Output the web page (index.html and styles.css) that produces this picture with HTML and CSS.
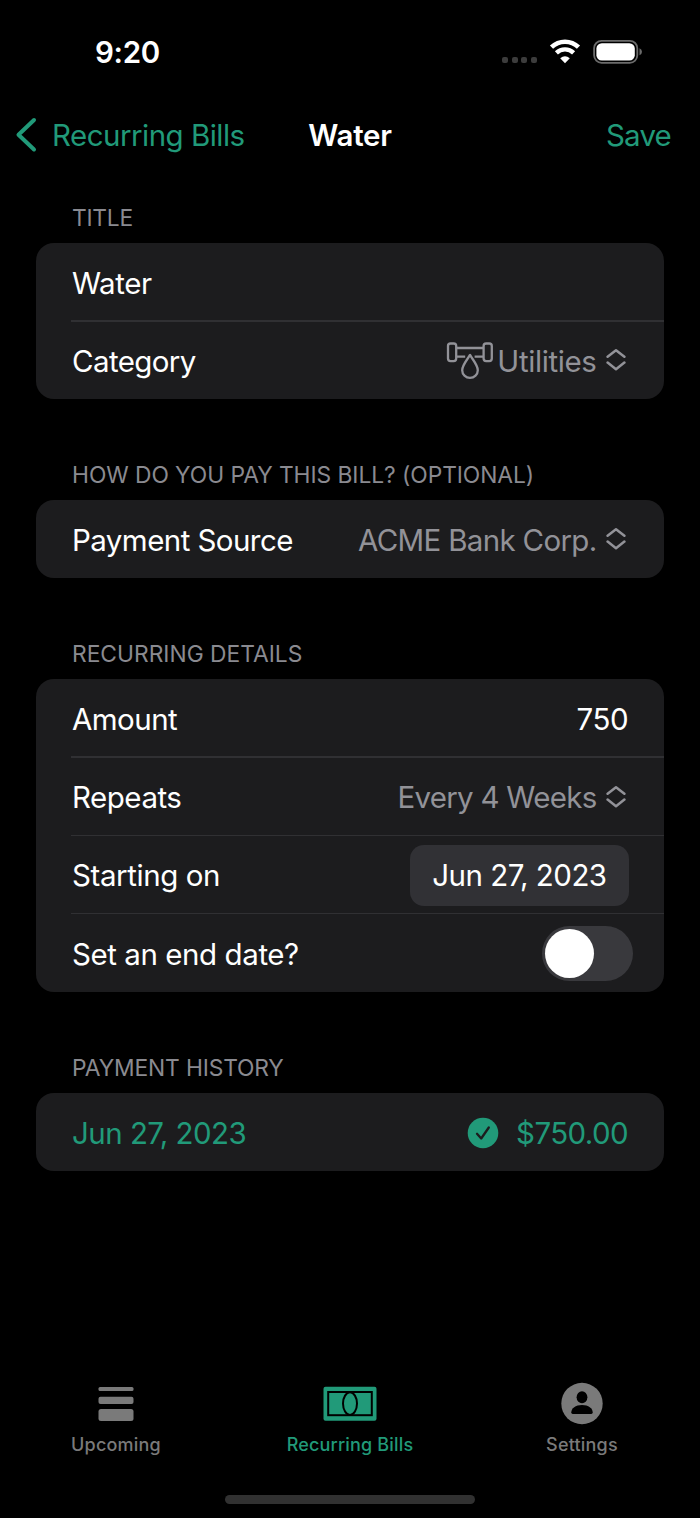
FILE: index.html
```html
<!DOCTYPE html>
<html lang="en">
<head>
<meta charset="utf-8">
<title>Water</title>
<link rel="stylesheet" href="styles.css">
</head>
<body>
<div class="screen">
  <div class="status">
    <span class="clock">9:20</span>
    <div class="indicators">
      <div class="signal"><i></i><i></i><i></i><i></i></div>
      <svg class="wifi" width="32" height="26" viewBox="0 0 32 26" fill="none" stroke="#fff">
        <path d="M2.500 8.200A19.600 19.600 0 0 1 29.500 8.200" stroke-width="4.600"/>
        <path d="M7.400 13.800A12.500 12.500 0 0 1 24.600 13.800" stroke-width="4.400"/>
        <path d="M16 24.300L11.200 19.200Q16 15.200 20.800 19.200Z" fill="#fff" stroke="none"/>
      </svg>
      <svg class="battery" width="50" height="26" viewBox="0 0 50 26">
        <rect x="1.100" y="1.800" width="43.200" height="22" rx="7.500" fill="none" stroke="#6b6b6b" stroke-width="1.800"/>
        <rect x="3.400" y="4.200" width="38.400" height="17.400" rx="5.400" fill="#fff"/>
        <path d="M46.500 9.300Q49 10.300 49 12.800Q49 15.300 46.500 16.300Z" fill="#6b6b6b"/>
      </svg>
    </div>
  </div>
  <nav class="navbar">
    <a class="back">
      <svg width="22" height="36" viewBox="0 0 22 36" fill="none" stroke="currentColor" stroke-width="4" stroke-linecap="round" stroke-linejoin="round"><path d="M19 3L3.500 17.800L19 32.500"/></svg>
      <span class="back-text">Recurring Bills</span>
    </a>
    <h1 class="title">Water</h1>
    <a class="save">Save</a>
  </nav>
  <main class="form">
    <section>
      <h2 class="heading h-title">TITLE</h2>
      <div class="card">
        <div class="row"><span class="label l-water">Water</span></div>
        <div class="row">
          <span class="label l-category">Category</span>
          <div class="value">
            <svg class="pipe" width="48" height="40" viewBox="0 0 48 40" fill="none" stroke="currentColor" stroke-width="2.300">
              <rect x="2" y="3.500" width="8.200" height="17.600" rx="2.500"/>
              <rect x="37.600" y="3.500" width="8.200" height="17.600" rx="2.500"/>
              <path d="M10.200 8H37.600M10.200 16.600H19.200M28.600 16.600H37.600"/>
              <path d="M24 14.900C21.500 19.500 16.200 25 16.200 30.200A7.800 7.600 0 0 0 31.800 30.200C31.800 25 26.500 19.500 24 14.900Z" stroke-linejoin="round"/>
            </svg>
            <span class="v-utilities">Utilities</span>
            <svg class="updown" width="20" height="24" viewBox="0 0 20 24"><path d="M1.600 8.800L10 2.200L18.400 8.800M1.600 14.600L10 21.200L18.400 14.600"/></svg>
          </div>
        </div>
      </div>
    </section>
    <section>
      <h2 class="heading h-pay">HOW DO YOU PAY THIS BILL? (OPTIONAL)</h2>
      <div class="card">
        <div class="row">
          <span class="label l-source">Payment Source</span>
          <div class="value">
            <span class="v-bank">ACME Bank Corp.</span>
            <svg class="updown" width="20" height="24" viewBox="0 0 20 24"><path d="M1.600 8.800L10 2.200L18.400 8.800M1.600 14.600L10 21.200L18.400 14.600"/></svg>
          </div>
        </div>
      </div>
    </section>
    <section>
      <h2 class="heading h-details">RECURRING DETAILS</h2>
      <div class="card">
        <div class="row"><span class="label l-amount">Amount</span><span class="amount">750</span></div>
        <div class="row">
          <span class="label l-repeats">Repeats</span>
          <div class="value">
            <span class="v-weeks">Every 4 Weeks</span>
            <svg class="updown" width="20" height="24" viewBox="0 0 20 24"><path d="M1.600 8.800L10 2.200L18.400 8.800M1.600 14.600L10 21.200L18.400 14.600"/></svg>
          </div>
        </div>
        <div class="row"><span class="label l-start">Starting on</span><span class="date-pill"><span class="v-date">Jun 27, 2023</span></span></div>
        <div class="row"><span class="label l-end">Set an end date?</span><span class="switch"><i class="knob"></i></span></div>
      </div>
    </section>
    <section>
      <h2 class="heading h-history">PAYMENT HISTORY</h2>
      <div class="card">
        <div class="row paid">
          <span class="label l-paid">Jun 27, 2023</span>
          <div class="payment">
            <svg width="32" height="32" viewBox="0 0 32 32"><circle cx="16" cy="16" r="15.300" fill="#219a79"/><path d="M10 16.800L14.200 21.500L21.800 10.500" fill="none" stroke="#1c1c1e" stroke-width="2.300" stroke-linecap="round" stroke-linejoin="round"/></svg>
            <span class="v-paid">$750.00</span>
          </div>
        </div>
      </div>
    </section>
  </main>
  <footer class="tabs">
    <div class="tab">
      <svg width="40" height="44" viewBox="0 0 40 44" fill="currentColor"><rect x="2.500" y="5" width="35" height="4" rx="1.500"/><rect x="2.500" y="14.700" width="35" height="7.300" rx="2"/><rect x="2.500" y="27" width="35" height="12" rx="2.500"/></svg>
      <span class="t-upcoming">Upcoming</span>
    </div>
    <div class="tab active">
      <svg width="54" height="44" viewBox="0 0 54 44"><rect x="0.500" y="4.700" width="53" height="34" rx="2" fill="currentColor"/><rect x="5.200" y="10" width="43.600" height="23.200" fill="none" stroke="#000" stroke-width="2"/><ellipse cx="27" cy="21.600" rx="7" ry="11.300" fill="none" stroke="#000" stroke-width="2"/></svg>
      <span class="t-bills">Recurring Bills</span>
    </div>
    <div class="tab">
      <svg width="44" height="44" viewBox="0 0 44 44"><circle cx="22" cy="21.500" r="20.700" fill="currentColor"/><ellipse cx="22" cy="15.200" rx="5.400" ry="6" fill="#000"/><path d="M11.300 30.300C11.300 26.500 15.500 23 22 23S32.700 26.500 32.700 30.300Q32.700 32 31.300 32H12.700Q11.300 32 11.300 30.300Z" fill="#000"/></svg>
      <span class="t-settings">Settings</span>
    </div>
  </footer>
  <div class="home"></div>
</div>
</body>
</html>
```
FILE: styles.css
```css
* { box-sizing: border-box; }
body { margin: 0; background: #000; }
.screen {
  width: 700px; height: 1518px; background: #000; color: #fff;
  display: flex; flex-direction: column; overflow: hidden;
  font-family: Inter, "Liberation Sans", sans-serif; font-size: 29.500px; line-height: 36px;
  white-space: nowrap;
}
svg { display: block; flex: none; }
.status { height: 104px; padding: 0 57px 0 95px; display: flex; justify-content: space-between; align-items: center; }
.clock { font-weight: 600; letter-spacing: -0.300px; }
.indicators { display: flex; align-items: center; }
.signal { display: flex; gap: 3.600px; margin: 16px 12px 0 0; }
.signal i { width: 6px; height: 6px; border-radius: 2px; background: #3c3c3c; }
.wifi { margin-right: 12px; }
.navbar { height: 62px; padding: 0 29px; display: grid; grid-template-columns: minmax(0, 1fr) auto minmax(0, 1fr); align-items: center; }
.back { display: flex; align-items: center; gap: 15px; color: #219a79; margin-left: -14px; }
.back-text { letter-spacing: -0.520px; }
.title { margin: 0; font-size: 29.500px; font-weight: 600; letter-spacing: -0.250px; }
.save { color: #219a79; text-align: right; letter-spacing: -0.800px; }
.form { padding: 37px 36px 0; flex: 1; }
.heading { margin: 0 36px 10.800px; height: 29px; line-height: 29px; font-size: 22.800px; font-weight: 400; color: #8a8a90; }
.h-title { letter-spacing: -0.250px; }
.h-pay { letter-spacing: -0.060px; }
.h-history { letter-spacing: -0.140px; }
section + section { margin-top: 60.900px; }
.card { background: #1c1c1e; border-radius: 18px; }
.row { position: relative; height: 78.300px; padding: 1px 36px 0; display: flex; align-items: center; justify-content: space-between; }
.row + .row::before { content: ""; position: absolute; top: -1px; left: 35px; right: 0; height: 1.500px; background: #303033; }
.l-water { letter-spacing: -0.450px; padding-top: 1px; }
.l-category { letter-spacing: -0.600px; }
.l-source { letter-spacing: -0.560px; }
.l-amount { letter-spacing: -0.550px; }
.l-repeats { letter-spacing: -0.480px; }
.l-start { letter-spacing: -0.420px; }
.l-end { letter-spacing: -0.430px; }
.l-paid, .v-date { letter-spacing: -0.530px; }
.v-utilities { letter-spacing: -0.380px; }
.v-bank { letter-spacing: -0.680px; }
.v-weeks { letter-spacing: -0.720px; }
.v-paid { letter-spacing: -0.600px; }
.amount { letter-spacing: -0.500px; }
.value { display: flex; align-items: center; color: #929298; margin-right: 2px; }
.pipe { margin: -2px 3.500px 0 0; }
.updown { margin: -1px 0 0 9.500px; fill: none; stroke: currentColor; stroke-width: 2.500px; stroke-linecap: round; stroke-linejoin: round; }
.date-pill { width: 218.500px; height: 61px; margin: 0 -0.700px 0 0; border-radius: 14px; background: #313135; display: flex; align-items: center; justify-content: center; }
.switch { width: 91px; height: 55px; border-radius: 28px; background: #39393d; padding: 3px; margin: -1px -4.500px 0 0; }
.knob { display: block; width: 49px; height: 49px; border-radius: 50%; background: #fff; }
.paid { color: #219a79; }
.payment { display: flex; align-items: center; gap: 17px; }
.tabs { display: grid; grid-template-columns: repeat(3, 233px); justify-content: center; height: 104px; margin-bottom: -8px; font-size: 18px; font-weight: 500; line-height: 24px; letter-spacing: 0.180px; color: #7a7a7a; }
.tab { display: flex; flex-direction: column; align-items: center; gap: 7px; }
.tab:first-child, .tab:last-child { padding-right: 2px; }
.t-upcoming, .t-settings { letter-spacing: 0.200px; }
.active { color: #219a79; }
.home { width: 250px; height: 9px; border-radius: 5px; background: #313131; margin: 16.500px auto 14.500px; flex: none; }
```
